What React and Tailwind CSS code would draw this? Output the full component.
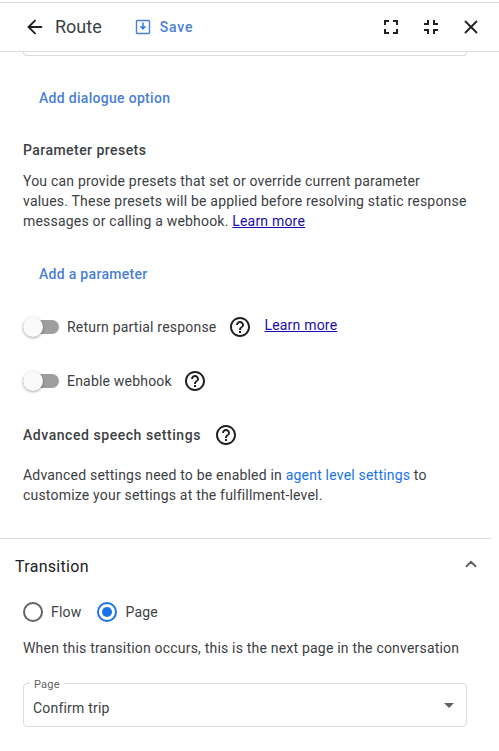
import { ArrowLeft, X, ChevronUp } from "lucide-react"

function Help() {
  return (
    <svg width="24" height="24" viewBox="0 0 24 24" fill="#202124">
      <path d="M11 18h2v-2h-2v2zm1-16C6.48 2 2 6.48 2 12s4.48 10 10 10 10-4.48 10-10S17.52 2 12 2zm0 18c-4.41 0-8-3.59-8-8s3.59-8 8-8 8 3.59 8 8-3.59 8-8 8zm0-14c-2.21 0-4 1.79-4 4h2c0-1.1.9-2 2-2s2 .9 2 2c0 2-3 1.75-3 5h2c0-2.25 3-2.5 3-5 0-2.21-1.79-4-4-4z" />
    </svg>
  )
}

function Toggle() {
  return (
    <div className="relative h-[14px] w-[36px] rounded-full bg-[#9e9e9e]">
      <div className="absolute left-0 top-[-3px] h-5 w-5 rounded-full bg-[#fafafa] shadow-[0_1px_3px_rgba(0,0,0,0.35)]" />
    </div>
  )
}

export default function App() {
  return (
    <div className="h-[751px] w-[499px] overflow-hidden bg-white font-['Roboto',sans-serif] text-sm tracking-[0.2px] text-[#3c4043]">
      <div className="h-[3px] border-b border-[#dadce0] pb-[2px]" />
      <header className="flex h-[49px] items-center border-b border-[#dadce0] pl-[24px] pr-[21px]">
        <ArrowLeft size={22} strokeWidth={2} className="text-[#202124]" />
        <span className="ml-[9px] text-[18px] tracking-normal text-[#3c4043]">Route</span>
        <svg className="ml-[33px]" width="16" height="16" viewBox="0 0 16 16" fill="none">
          <rect x="1.5" y="1.5" width="13" height="13" rx="1" stroke="#4a7fd6" strokeWidth="1.4" />
          <path d="M8 3.5v6M5.5 7.2 8 9.7l2.5-2.5" stroke="#1a73e8" strokeWidth="1.4" />
        </svg>
        <span className="ml-[9px] text-sm font-medium tracking-[0.8px] text-[#4a7fd6]">Save</span>
        <div className="ml-auto flex items-center gap-[26px]">
          <svg width="14" height="14" viewBox="0 0 14 14" fill="#202124">
            <path d="M0 0h5v2H2v3H0zM9 0h5v5h-2V2H9zM0 9h2v3h3v2H0zM12 9h2v5H9v-2h3z" />
          </svg>
          <svg width="14" height="14" viewBox="0 0 14 14" fill="#202124">
            <path d="M3 0h2v5H0V3h3zM9 0h2v3h3v2H9zM0 9h5v5H3v-3H0zM9 9h5v2h-3v3H9z" />
          </svg>
          <X size={22} strokeWidth={2} className="-mx-[4px] text-[#202124]" />
        </div>
      </header>

      <main>
        <div className="ml-[23px] h-[4px] w-[444px] rounded-b border border-t-0 border-[#dadce0]" />

        <div className="w-[467px] pl-[23px]">
          <div className="mt-[32px] pl-[16px] font-medium leading-5 tracking-[0.3px] text-[#4a7fd6]">Add dialogue option</div>

          <h3 className="mt-[32px] font-medium leading-5 tracking-[0.45px] text-[#3c4043]">Parameter presets</h3>
          <p className="mt-[11px] leading-5">
            You can provide presets that set or override current parameter values. These presets will be applied before resolving static response messages or calling a webhook.{" "}
            <a className="text-[#1a0dab] underline">Learn more</a>
          </p>

          <div className="mt-[33px] pl-[16px] font-medium leading-5 tracking-[0.3px] text-[#4a7fd6]">Add a parameter</div>

          <div className="mt-[31px] flex h-6 items-center">
            <Toggle />
            <span className="ml-[8px]">Return partial response</span>
            <span className="ml-[12px]"><Help /></span>
            <a className="ml-[12px] -translate-y-[2px] text-[#1a0dab] underline">Learn more</a>
          </div>

          <div className="mt-[30px] flex h-6 items-center">
            <Toggle />
            <span className="ml-[8px]">Enable webhook</span>
            <span className="ml-[11px]"><Help /></span>
          </div>

          <div className="mt-[30px] flex h-6 items-center">
            <span className="font-medium tracking-[0.55px] text-[#3c4043]">Advanced speech settings</span>
            <span className="ml-[13px]"><Help /></span>
          </div>

          <p className="mt-[18px] leading-5">
            Advanced settings need to be enabled in <a className="text-[#1a73e8]">agent level settings</a> to customize your settings at the fulfillment-level.
          </p>
        </div>

        <div className="mr-[8px] mt-[33px] border-t border-[#dadce0]" />

        <section className="px-[23px]">
          <div className="-ml-[8px] mt-[16px] flex h-6 items-center justify-between">
            <h2 className="text-base tracking-[0.3px] text-[#202124]">Transition</h2>
            <ChevronUp size={18} strokeWidth={2.5} className="mb-[6px] -mr-[4px] text-[#5f6368]" />
          </div>

          <div className="mt-[23px] flex h-5 items-center">
            <div className="h-5 w-5 rounded-full border-2 border-[#5f6368]" />
            <span className="ml-[8px]">Flow</span>
            <div className="ml-[16px] flex h-5 w-5 items-center justify-center rounded-full border-2 border-[#1a73e8]">
              <div className="h-[10px] w-[10px] rounded-full bg-[#1a73e8]" />
            </div>
            <span className="ml-[8px]">Page</span>
          </div>

          <p className="mt-[16px] leading-5">When this transition occurs, this is the next page in the conversation</p>

          <div className="relative mt-[25px] flex h-[44px] w-[444px] items-center justify-between rounded border border-[#dadce0] pl-[9px] pr-[12px]">
            <span className="absolute -top-[6px] left-[6px] bg-white px-[4px] text-[11px] leading-[14px] text-[#5f6368]">Page</span>
            <span className="mt-[6px] text-[#3c4043]">Confirm trip</span>
            <div className="h-0 w-0 border-x-[5px] border-t-[5px] border-x-transparent border-t-[#5f6368]" />
          </div>
        </section>
      </main>
    </div>
  )
}
